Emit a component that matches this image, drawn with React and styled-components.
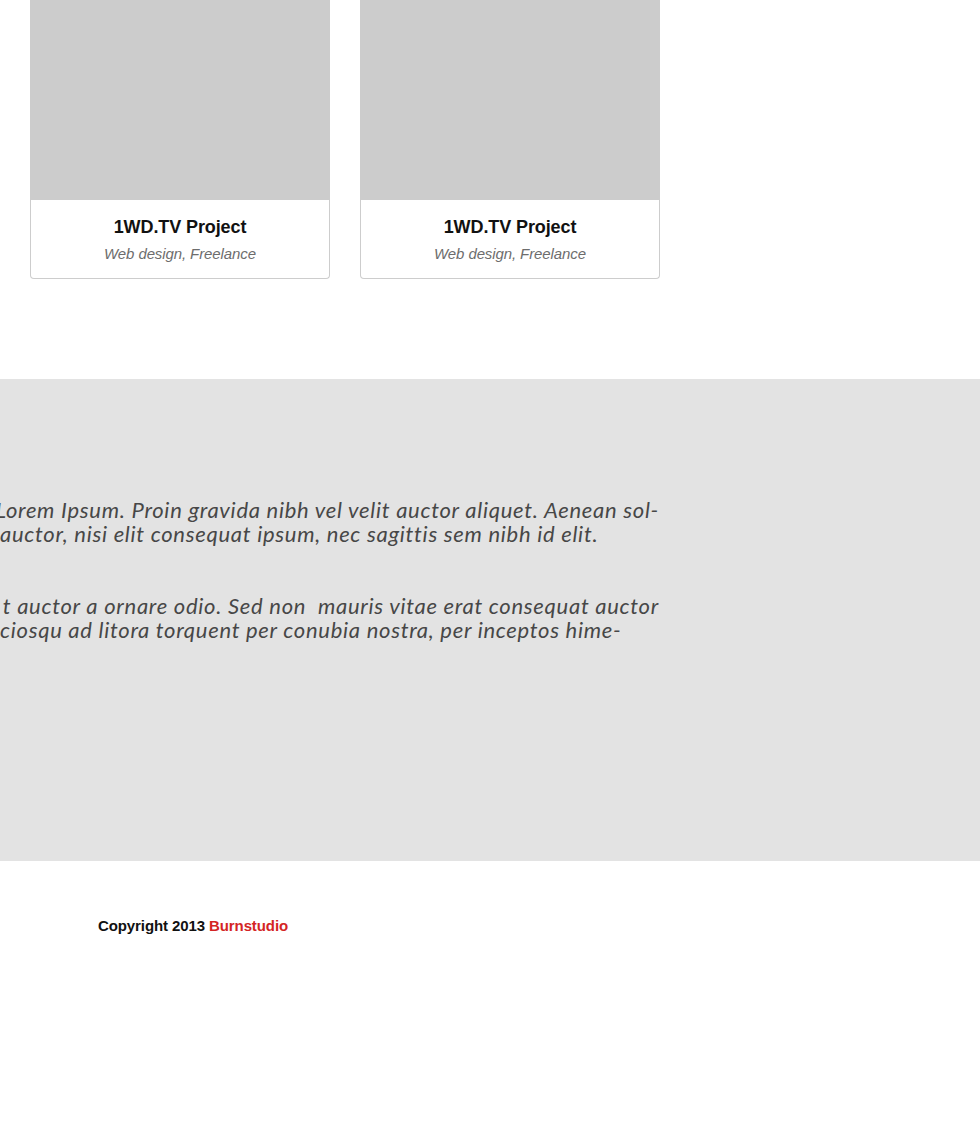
import React from "react";
import styled, { createGlobalStyle } from "styled-components";

const Global = createGlobalStyle`
  html, body { margin: 0; padding: 0; background: #ffffff; }
  body { overflow: hidden; font-family: "Liberation Sans", Arial, sans-serif; }
`;

const Page = styled.div`
  width: 980px;
  min-height: 1139px;
  display: flex;
  flex-direction: column;
`;

const Portfolio = styled.section`
  display: flex;
  gap: 30px;
  padding-left: 30px;
  margin-bottom: 100px;
`;

const Card = styled.div`
  width: 300px;
  box-sizing: border-box;
  border: 1px solid #cdcdcd;
  border-top: none;
  border-radius: 0 0 4px 4px;
  display: flex;
  flex-direction: column;
  background: #fff;
`;

const Thumb = styled.div`
  height: 200px;
  margin: 0 -1px;
  background: #cccccc;
`;

const Caption = styled.div`
  height: 78px;
  display: flex;
  flex-direction: column;
  align-items: center;
  padding-top: 16px;
  box-sizing: border-box;
`;

const Title = styled.div`
  font-family: "Liberation Sans", Arial, sans-serif;
  font-weight: 700;
  font-size: 18px;
  line-height: 22px;
  letter-spacing: -0.1px;
  color: #111;
`;

const Tags = styled.div`
  font-family: "Liberation Sans", Arial, sans-serif;
  font-style: italic;
  font-size: 15px;
  line-height: 20px;
  margin-top: 6px;
  letter-spacing: -0.1px;
  color: #6d6d6d;
`;

const Quote = styled.section`
  height: 482px;
  background: #e3e3e3;
  box-sizing: border-box;
  padding-top: 119px;
  overflow: hidden;
`;

const TextBlock = styled.div`
  width: 659px;
  display: flex;
  flex-direction: column;
`;

const Paragraph = styled.div`
  display: flex;
  flex-direction: column;
  & + & { margin-top: 48px; }
`;

const Line = styled.div`
  display: flex;
  justify-content: ${(p) => (p.$full ? "flex-end" : "flex-start")};
  white-space: nowrap;
  font-family: Lato, "Open Sans", sans-serif;
  font-style: italic;
  font-size: 22px;
  line-height: 24px;
  letter-spacing: 0.72px;
  color: #474747;
`;

const Footer = styled.footer`
  padding: 55px 0 0 98px;
  font-family: "Liberation Sans", Arial, sans-serif;
  font-weight: 700;
  font-size: 15px;
  line-height: 20px;
  letter-spacing: -0.1px;
  color: #111;
`;

const Brand = styled.span`
  color: #d42424;
`;

const projects = [
  { title: "1WD.TV Project", tags: "Web design, Freelance" },
  { title: "1WD.TV Project", tags: "Web design, Freelance" },
];

export default function App() {
  return (
    <>
      <Global />
      <Page>
        <Portfolio>
          {projects.map((p, i) => (
            <Card key={i}>
              <Thumb />
              <Caption>
                <Title>{p.title}</Title>
                <Tags>{p.tags}</Tags>
              </Caption>
            </Card>
          ))}
        </Portfolio>
        <Quote>
          <TextBlock>
            <Paragraph>
              <Line $full>
                <span>Lorem Ipsum. Proin gravida nibh vel velit auctor aliquet. Aenean sol-</span>
              </Line>
              <Line>
                <span>auctor, nisi elit consequat ipsum, nec sagittis sem nibh id elit.</span>
              </Line>
            </Paragraph>
            <Paragraph>
              <Line $full>
                <span>t auctor a ornare odio. Sed non&nbsp; mauris vitae erat consequat auctor</span>
              </Line>
              <Line>
                <span>ciosqu ad litora torquent per conubia nostra, per inceptos hime-</span>
              </Line>
            </Paragraph>
          </TextBlock>
        </Quote>
        <Footer>
          Copyright 2013 <Brand>Burnstudio</Brand>
        </Footer>
      </Page>
    </>
  );
}
